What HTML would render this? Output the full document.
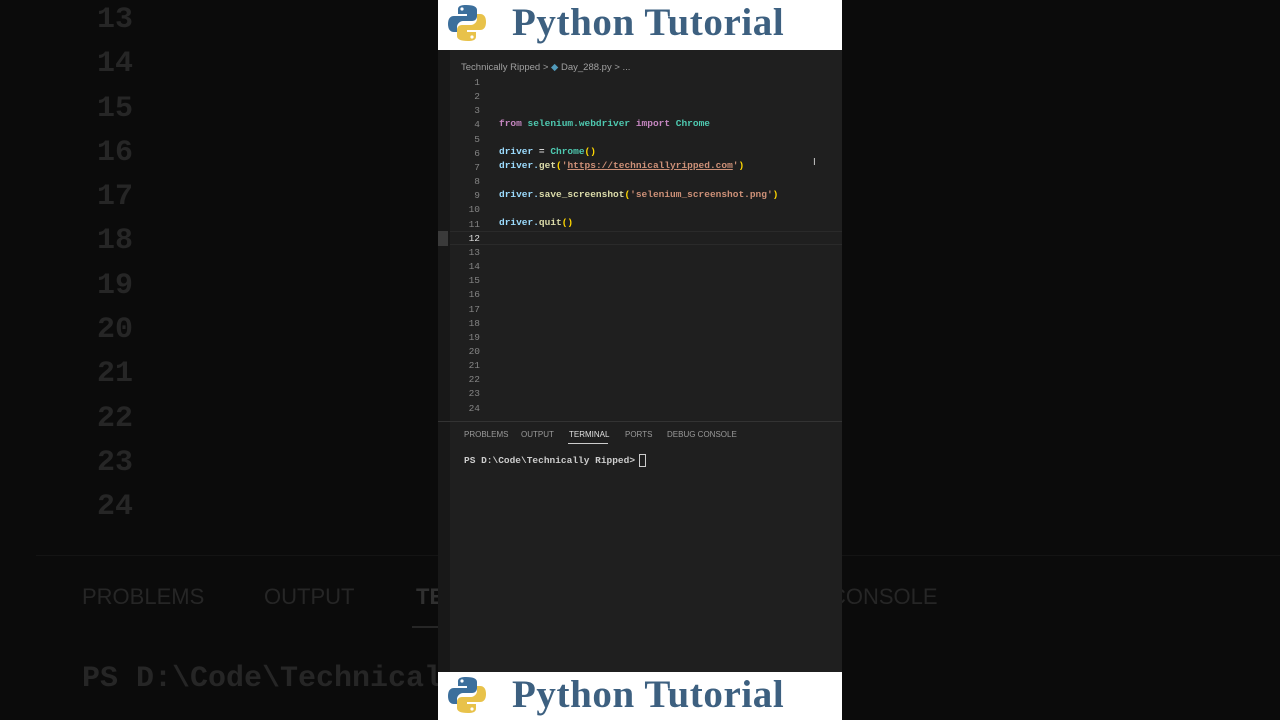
<!DOCTYPE html>
<html><head><meta charset="utf-8"><style>
*{margin:0;padding:0;box-sizing:border-box}
body{width:1280px;height:720px;background:#0b0b0b;position:relative;overflow:hidden;font-family:"Liberation Sans",sans-serif}
.a{position:absolute;white-space:pre}
.bg{color:#262626;font-family:"Liberation Mono",monospace;font-size:30px;font-weight:bold}
.mono{font-family:"Liberation Mono",monospace}
.ln{color:#858585;font-size:9.5px;width:42px;text-align:right;left:438px}
.code{left:499px;font-size:9.5px;font-weight:bold;color:#9cdcfe}
.banner{position:absolute;left:438px;width:404px;height:50px;background:#fff}
.banner .t{position:absolute;left:74px;top:0px;font-family:"Liberation Serif",serif;font-weight:bold;font-size:39px;letter-spacing:0.6px;color:#3d6080}
</style></head><body>
<div class="a bg" style="left:97px;top:-2px;line-height:44.3px">13
14
15
16
17
18
19
20
21
22
23
24</div>
<div class="a" style="left:36px;top:555px;width:1244px;height:1px;background:#141414"></div>
<div class="a" style="left:82px;top:584px;font-size:22px;color:#262626">PROBLEMS</div>
<div class="a" style="left:264px;top:584px;font-size:22px;color:#262626">OUTPUT</div>
<div class="a" style="left:416px;top:584px;font-size:22px;color:#303030;font-weight:bold">TE</div>
<div class="a" style="left:412px;top:626px;width:30px;height:2px;background:#262626"></div>
<div class="a" style="left:830px;top:584px;font-size:22px;color:#262626">CONSOLE</div>
<div class="a bg" style="left:82px;top:662px">PS D:\Code\Technical</div>

<div class="a" style="left:438px;top:50px;width:404px;height:622px;background:#1f1f1f"></div>
<div class="a" style="left:438px;top:50px;width:12px;height:622px;background:#181818"></div>
<div class="a" style="left:438px;top:231px;width:10px;height:15px;background:#3a3a3a"></div>
<div class="a" style="left:450px;top:231px;width:392px;height:14px;border-top:1px solid #2a2a2a;border-bottom:1px solid #2a2a2a"></div>
<div class="a" style="left:461px;top:62px;font-size:9.5px;color:#a0a0a0">Technically Ripped &gt; <span style="color:#519aba">◆</span> Day_288.py &gt; ...</div>
<div class="a mono ln" style="top:76px;line-height:14.15px">1
2
3
4
5
6
7
8
9
10
11
<span style="color:#ddd">12</span>
13
14
15
16
17
18
19
20
21
22
23
24</div>
<div class="a mono code" style="top:118px"><span style="color:#c586c0">from</span> <span style="color:#4ec9b0">selenium.webdriver</span> <span style="color:#c586c0">import</span> <span style="color:#4ec9b0">Chrome</span></div>
<div class="a mono code" style="top:146px">driver <span style="color:#d4d4d4">=</span> <span style="color:#4ec9b0">Chrome</span><span style="color:#ffd700">()</span></div>
<div class="a mono code" style="top:160px">driver.<span style="color:#dcdcaa">get</span><span style="color:#ffd700">(</span><span style="color:#ce9178">'<u>https://technicallyripped.com</u>'</span><span style="color:#ffd700">)</span></div>
<div class="a mono code" style="top:189px">driver.<span style="color:#dcdcaa">save_screenshot</span><span style="color:#ffd700">(</span><span style="color:#ce9178">'selenium_screenshot.png'</span><span style="color:#ffd700">)</span></div>
<div class="a mono code" style="top:217px">driver.<span style="color:#dcdcaa">quit</span><span style="color:#ffd700">()</span></div>
<div class="a" style="left:813px;top:157px;font-size:10px;color:#ccc">I</div>
<div class="a" style="left:438px;top:421px;width:404px;height:1px;background:#333"></div>
<div class="a" style="left:464px;top:430px;font-size:8px;color:#9a9a9a">PROBLEMS</div>
<div class="a" style="left:521px;top:430px;font-size:8px;color:#9a9a9a">OUTPUT</div>
<div class="a" style="left:569px;top:430px;font-size:8px;color:#e0e0e0">TERMINAL</div>
<div class="a" style="left:568px;top:443px;width:40px;height:1px;background:#ccc"></div>
<div class="a" style="left:625px;top:430px;font-size:8px;color:#9a9a9a">PORTS</div>
<div class="a" style="left:667px;top:430px;font-size:8px;color:#9a9a9a">DEBUG CONSOLE</div>
<div class="a mono" style="left:464px;top:455px;font-size:9.5px;font-weight:bold;color:#ccc">PS D:\Code\Technically Ripped&gt; </div>
<div class="a" style="left:639px;top:454px;width:7px;height:13px;border:1px solid #ccc"></div>

<div class="banner" style="top:0"><svg style="position:absolute;left:10px;top:4px" width="38" height="38" viewBox="0 0 38 38"><path d="M18 1c-8 0-8 3-8 5v4h9v2H6c-4 0-6 3-6 8s2 8 6 8h3v-5c0-3 3-6 6-6h9c3 0 5-2 5-5V6c0-3-3-5-11-5z" fill="#3c6f9c"/><circle cx="14" cy="5" r="1.6" fill="#fff"/><path d="M20 37c8 0 8-3 8-5v-4h-9v-2h13c4 0 6-3 6-8s-2-8-6-8h-3v5c0 3-3 6-6 6h-9c-3 0-5 2-5 5v6c0 3 3 5 11 5z" fill="#e8c24a"/><circle cx="24" cy="33" r="1.6" fill="#fff"/></svg><div class="t">Python Tutorial</div></div>
<div class="banner" style="top:672px;height:48px"><svg style="position:absolute;left:10px;top:4px" width="38" height="38" viewBox="0 0 38 38"><path d="M18 1c-8 0-8 3-8 5v4h9v2H6c-4 0-6 3-6 8s2 8 6 8h3v-5c0-3 3-6 6-6h9c3 0 5-2 5-5V6c0-3-3-5-11-5z" fill="#3c6f9c"/><circle cx="14" cy="5" r="1.6" fill="#fff"/><path d="M20 37c8 0 8-3 8-5v-4h-9v-2h13c4 0 6-3 6-8s-2-8-6-8h-3v5c0 3-3 6-6 6h-9c-3 0-5 2-5 5v6c0 3 3 5 11 5z" fill="#e8c24a"/><circle cx="24" cy="33" r="1.6" fill="#fff"/></svg><div class="t">Python Tutorial</div></div>
</body></html>
